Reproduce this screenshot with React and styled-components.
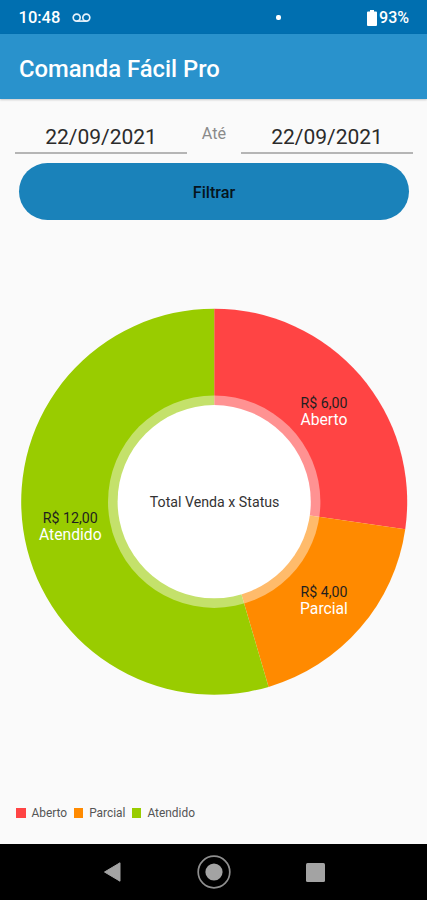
import styled, { createGlobalStyle } from "styled-components";

const SALES = [
	{ status: "Aberto", total: 6, color: "#ff4444", x: 324, y: 402 },
	{ status: "Parcial", total: 4, color: "#ff8a00", x: 324, y: 591.5 },
	{ status: "Atendido", total: 12, color: "#99cc00", x: 70.3, y: 517.5 },
];

const CX = 214.2;
const CY = 201.7;
const RADIUS = 193;

function point(angle) {
	return `${CX + RADIUS * Math.sin(angle)} ${CY - RADIUS * Math.cos(angle)}`;
}

function getSlices() {
	const sum = SALES.reduce((acc, item) => acc + item.total, 0);
	let start = 0;
	return SALES.map((item) => {
		const end = start + (item.total / sum) * Math.PI * 2;
		const large = end - start > Math.PI ? 1 : 0;
		const d = `M${CX} ${CY} L${point(start)} A${RADIUS} ${RADIUS} 0 ${large} 1 ${point(end)} Z`;
		start = end;
		return { ...item, d };
	});
}

const PieChart = () => {
	const slices = getSlices();
	return (
		<Chart viewBox="0 0 427 404">
			{slices.map((item) => (
				<path key={item.status} d={item.d} fill={item.color} />
			))}
			<circle cx={CX} cy={CY} r="106.2" fill="#fff" fillOpacity="0.42" />
			<circle cx={CX} cy={CY} r="96.6" fill="#fff" />
			<CenterText x={CX + 0.4} y="206.5">
				Total Venda x Status
			</CenterText>
			{slices.map((item) => (
				<g key={item.status}>
					<ValueText x={item.x} y={item.y - 294.5}>
						R$ {item.total},00
					</ValueText>
					<StatusText x={item.x} y={item.y - 277.5}>
						{item.status}
					</StatusText>
				</g>
			))}
		</Chart>
	);
};

const App = () => {
	return (
		<>
			<GlobalStyle />
			<Screen>
				<StatusBar>
					<span>10:48</span>
					<svg className="voicemail" width="19" height="10" viewBox="0 0 19 10">
						<g fill="none" stroke="#e4f1fa" strokeWidth="1.7">
							<circle cx="4.7" cy="4.6" r="3.5" />
							<circle cx="14.3" cy="4.6" r="3.5" />
							<path d="M4.7 8.1H14.3" />
						</g>
					</svg>
					<i />
					<svg className="battery" width="10" height="16" viewBox="0 0 10 16">
						<path
							d="M3 0H7V1.6H9Q10 1.6 10 2.6V15Q10 16 9 16H1Q0 16 0 15V2.6Q0 1.6 1 1.6H3Z"
							fill="#fff"
						/>
					</svg>
					<span className="percent">93%</span>
				</StatusBar>
				<AppBar>
					<h1>Comanda Fácil Pro</h1>
				</AppBar>
				<Filters>
					<DateField>22/09/2021</DateField>
					<span>Até</span>
					<DateField>22/09/2021</DateField>
				</Filters>
				<FilterButton>Filtrar</FilterButton>
				<PieChart />
				<Legend>
					{SALES.map((item) => (
						<LegendItem key={item.status} $color={item.color}>
							{item.status}
						</LegendItem>
					))}
				</Legend>
				<NavBar>
					<svg width="19" height="20" viewBox="0 0 19 20">
						<path
							d="M1.5 10L17 .8V19.2Z"
							fill="#a3a3a3"
							stroke="#a3a3a3"
							strokeLinejoin="round"
						/>
					</svg>
					<svg width="34" height="34" viewBox="0 0 34 34">
						<circle cx="17" cy="17" r="15.8" fill="none" stroke="#8f8f8f" strokeWidth="1.7" />
						<circle cx="17" cy="17" r="8.6" fill="#a3a3a3" />
					</svg>
					<svg width="19" height="19" viewBox="0 0 19 19">
						<rect width="19" height="19" rx="1.5" fill="#a3a3a3" />
					</svg>
				</NavBar>
			</Screen>
		</>
	);
};

export default App;

const GlobalStyle = createGlobalStyle`
	* {
		box-sizing: border-box;
	}
	body {
		margin: 0;
		background-color: #fafafa;
		font-family: Roboto, "Liberation Sans", sans-serif;
	}
`;

const Screen = styled.div`
	width: 427px;
	height: 900px;
	display: flex;
	flex-direction: column;
	overflow: hidden;
	background-color: #fafafa;
`;

const StatusBar = styled.div`
	height: 33.5px;
	flex-shrink: 0;
	display: flex;
	align-items: center;
	padding: 2px 18px 0 18.5px;
	background-color: #006fb0;
	color: #fff;
	font-size: 16.5px;
	font-weight: 500;
	svg.voicemail {
		margin-left: 11.5px;
	}
	i {
		width: 5px;
		height: 5px;
		border-radius: 2px;
		background-color: #fff;
		margin: 0 auto 0 185px;
	}
	svg.battery {
		margin-right: 2px;
	}
	span.percent {
		font-size: 16px;
	}
`;

const AppBar = styled.header`
	height: 65.5px;
	flex-shrink: 0;
	display: flex;
	align-items: center;
	padding: 4.5px 19px 0;
	background-color: #2992cc;
	box-shadow: 0 1px 2px rgba(0, 0, 0, 0.2);
	h1 {
		margin: 0;
		color: #fff;
		font-size: 23.8px;
		font-weight: 500;
	}
`;

const Filters = styled.div`
	display: flex;
	justify-content: space-between;
	padding: 20px 14px 0 15px;
	span {
		margin-top: 5px;
		font-size: 16.2px;
		line-height: 20px;
		color: #8a8a8a;
	}
`;

const DateField = styled.div`
	width: 172px;
	height: 35px;
	border-bottom: 2px solid #b5b5b5;
	text-align: center;
	font-size: 21px;
	line-height: 37px;
	color: #2b2b2b;
`;

const FilterButton = styled.button`
	height: 57px;
	flex-shrink: 0;
	margin: 9px 18px 0 19px;
	padding: 1px 0 0;
	border: none;
	border-radius: 29px;
	background-color: #1a82ba;
	color: #06151e;
	font-family: inherit;
	font-size: 16.2px;
	font-weight: 500;
`;

const Chart = styled.svg`
	width: 427px;
	height: 404px;
	flex-shrink: 0;
	margin-top: 80px;
	text {
		text-anchor: middle;
	}
`;

const CenterText = styled.text`
	font-size: 14.2px;
	fill: #333;
`;

const ValueText = styled.text`
	font-size: 14.2px;
	fill: #1f1f1f;
`;

const StatusText = styled.text`
	font-size: 15.7px;
	fill: #fff;
`;

const Legend = styled.div`
	display: flex;
	gap: 6.5px;
	margin-top: auto;
	padding: 0 16px 24px;
`;

const LegendItem = styled.div`
	display: flex;
	align-items: center;
	gap: 6px;
	font-size: 11.9px;
	line-height: 14px;
	color: #555;
	&::before {
		content: "";
		width: 9.5px;
		height: 9.5px;
		background-color: ${(props) => props.$color};
	}
`;

const NavBar = styled.nav`
	height: 56px;
	flex-shrink: 0;
	display: flex;
	align-items: center;
	justify-content: space-between;
	padding: 0 102px 0 103px;
	background-color: #000;
`;
